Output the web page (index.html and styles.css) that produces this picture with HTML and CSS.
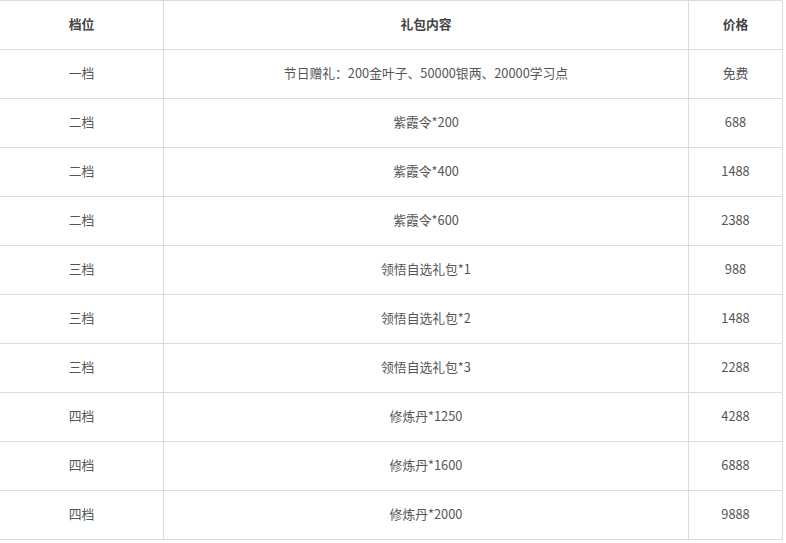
FILE: index.html
```html
<!DOCTYPE html>
<html lang="zh">
<head>
<meta charset="utf-8">
<link rel="stylesheet" href="styles.css">
</head>
<body>
<table class="gift-table">
  <colgroup>
    <col class="c-tier">
    <col class="c-content">
    <col class="c-price">
  </colgroup>
  <thead>
    <tr><th>档位</th><th>礼包内容</th><th>价格</th></tr>
  </thead>
  <tbody>
    <tr><td>一档</td><td>节日赠礼：200金叶子、50000银两、20000学习点</td><td>免费</td></tr>
    <tr><td>二档</td><td>紫霞令*200</td><td>688</td></tr>
    <tr><td>二档</td><td>紫霞令*400</td><td>1488</td></tr>
    <tr><td>二档</td><td>紫霞令*600</td><td>2388</td></tr>
    <tr><td>三档</td><td>领悟自选礼包*1</td><td>988</td></tr>
    <tr><td>三档</td><td>领悟自选礼包*2</td><td>1488</td></tr>
    <tr><td>三档</td><td>领悟自选礼包*3</td><td>2288</td></tr>
    <tr><td>四档</td><td>修炼丹*1250</td><td>4288</td></tr>
    <tr><td>四档</td><td>修炼丹*1600</td><td>6888</td></tr>
    <tr><td>四档</td><td>修炼丹*2000</td><td>9888</td></tr>
  </tbody>
</table>
</body>
</html>
```
FILE: styles.css
```css
html, body {
  margin: 0;
  padding: 0;
  background: #fff;
}
body {
  font-family: "Noto Sans CJK SC", "Noto Sans", sans-serif;
  font-size: 12.8px;
  color: #555;
}
.gift-table {
  border-collapse: collapse;
  table-layout: fixed;
  width: 783px;
  margin-left: -1px;
}
.c-tier { width: 164px; }
.c-content { width: 525px; }
.c-price { width: 94px; }
.gift-table th,
.gift-table td {
  border: 1px solid #dcdcdc;
  height: 49px;
  padding: 0 0 2px;
  text-align: center;
  vertical-align: middle;
  line-height: 20px;
  box-sizing: border-box;
}
.gift-table th {
  font-weight: bold;
  color: #444;
}
```
